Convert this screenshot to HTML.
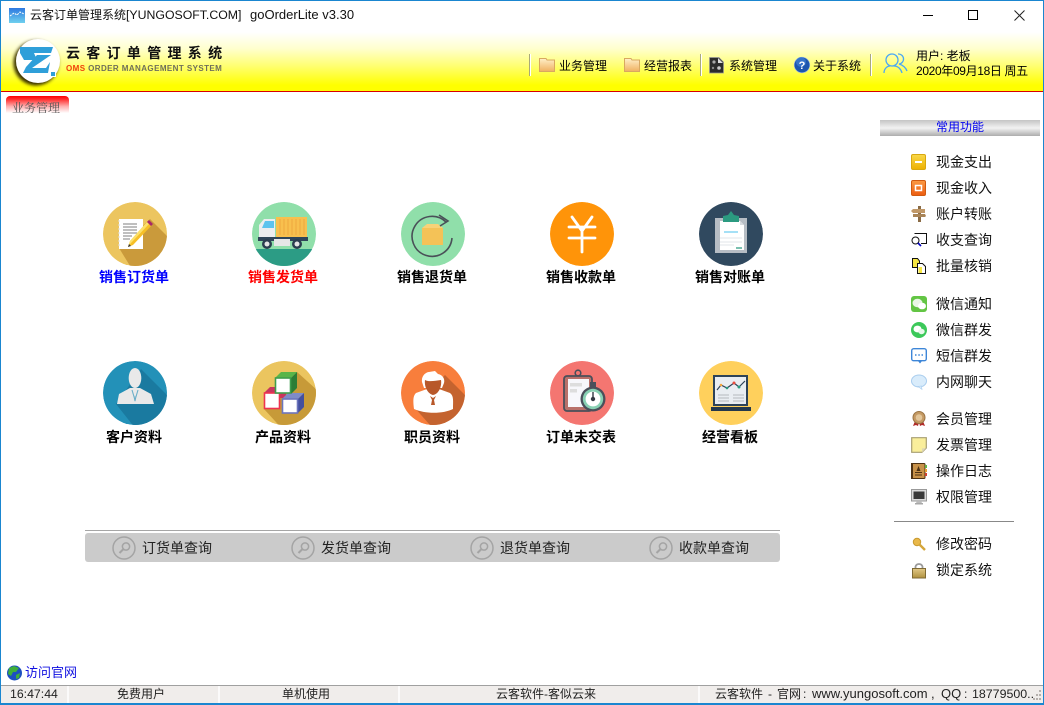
<!DOCTYPE html>
<html lang="zh"><head><meta charset="utf-8"><title>云客订单管理系统</title>
<style>
html,body{margin:0;padding:0;background:#fff}
#w{position:relative;width:1044px;height:705px;overflow:hidden;background:#fff;font-family:"Liberation Sans","Noto Sans CJK SC",sans-serif;color:#000;font-size:12px}
.t{position:absolute;white-space:nowrap;line-height:16px;height:16px}
.c{text-align:center;transform:translateX(-50%)}
.l{font-size:14px;font-weight:bold}
.m{font-size:14px;color:#111;left:936px}
.q{font-size:14px;color:#222}
.s{top:686px;color:#222}
.u{font-size:13px}
svg{position:absolute;left:0;top:0}
#hd{position:absolute;left:1px;right:1px;top:32px;height:59px;background:linear-gradient(#fff 0,#ffffce 28%,#ffff70 58%,#ffff00 90%,#ffff00 100%);border-bottom:1px solid #d80000}
#tab{position:absolute;left:6px;top:96px;width:63px;height:19px;border-radius:4px 4px 0 0;background:linear-gradient(#f00 0,#ff3030 18%,#ffb0b0 55%,#fff 90%)}
#cm{position:absolute;left:880px;top:120px;width:160px;height:16px;background:linear-gradient(#c4c4c4 0,#f2f2f2 50%,#adadad 100%)}
#bar{position:absolute;left:85px;top:533px;width:695px;height:29px;background:#cbcbcb;border-radius:3px}
#ln{position:absolute;left:85px;top:530px;width:695px;height:1px;background:#a6a6a6}
#sb{position:absolute;left:1px;right:1px;top:685px;height:18px;background:#f0edeb;border-top:1px solid #a0a0a0}
.sp{position:absolute;top:686px;width:2px;height:17px;background:#fbfafa}
#bl{position:absolute;left:0;top:0;width:1044px;height:705px;box-sizing:border-box;border:1px solid #1a86d0;border-bottom-width:2px;pointer-events:none}
</style></head><body>
<div id="w">
<div id="hd"></div>
<div id="tab"></div>
<div id="cm"></div>
<div id="ln"></div>
<div id="bar"></div>
<div id="sb"></div>
<div class="sp" style="left:67px"></div>
<div class="sp" style="left:218px"></div>
<div class="sp" style="left:398px"></div>
<div class="sp" style="left:698px"></div>

<svg width="1044" height="705" viewBox="0 0 1044 705">
<defs>
<clipPath id="cc"><circle cx="0" cy="0" r="32"/></clipPath>
<linearGradient id="ti" x1="0" y1="0" x2="0" y2="1"><stop offset="0" stop-color="#2d78e0"/><stop offset="1" stop-color="#6fd0ee"/></linearGradient>
<linearGradient id="fo" x1="0" y1="0" x2="0" y2="1"><stop offset="0" stop-color="#fff0c8"/><stop offset="1" stop-color="#f0b060"/></linearGradient>
<linearGradient id="yl" x1="0" y1="0" x2="0" y2="1"><stop offset="0" stop-color="#f9d84a"/><stop offset="1" stop-color="#edb000"/></linearGradient>
<linearGradient id="og" x1="0" y1="0" x2="0" y2="1"><stop offset="0" stop-color="#fb9a44"/><stop offset="1" stop-color="#ec5c10"/></linearGradient>
<linearGradient id="lk" x1="0" y1="0" x2="0" y2="1"><stop offset="0" stop-color="#e2c987"/><stop offset="1" stop-color="#b0913f"/></linearGradient>
<filter id="bl2"><feGaussianBlur stdDeviation="1.6"/></filter>
</defs>
<!-- title icon -->
<rect x="9" y="8" width="16" height="15" fill="url(#ti)"/>
<polyline points="10,16 14,13 17,15 20,12 24,14" fill="none" stroke="#fff" stroke-width="1" stroke-dasharray="2 1"/>
<!-- window controls -->
<path d="M923 15.5H933" stroke="#000" fill="none"/>
<rect x="968.5" y="10.5" width="9" height="9" fill="none" stroke="#000"/>
<path d="M1014.5 10.5L1024.5 20.5M1024.5 10.5L1014.5 20.5" stroke="#222" fill="none"/>
<!-- logo -->
<circle cx="36" cy="63" r="22.5" fill="#3a3000" filter="url(#bl2)"/>
<circle cx="38" cy="61" r="22" fill="#fff"/>
<path d="M20 47H53L51 53H34L37 60H24L20 53Z" fill="#2f9fd9"/>
<path d="M37 55H51L32 68H46L50 62L48 73H23L26 67Z" fill="#2f9fd9"/>
<rect x="50.5" y="71.5" width="5" height="5" fill="#2f9fd9" stroke="#fff"/>
<!-- menu separators -->
<g fill="#a9a97a"><rect x="529" y="54" width="1" height="22"/><rect x="700" y="54" width="1" height="22"/><rect x="870" y="54" width="1" height="22"/></g>
<g fill="#fff"><rect x="530" y="54" width="1" height="22"/><rect x="701" y="54" width="1" height="22"/><rect x="871" y="54" width="1" height="22"/></g>
<!-- folders -->
<path d="M539.5 58.5H546L547 60H554.5V71.5H539.5Z" fill="url(#fo)" stroke="#d8a860"/>
<path d="M624.5 58.5H631L632 60H639.5V71.5H624.5Z" fill="url(#fo)" stroke="#d8a860"/>
<!-- puzzle -->
<path d="M709.500 57.500H719L723.500 62V73H709.500Z" fill="#2c2c2c" stroke="#999" stroke-width=".7"/>
<path d="M718 58L723 63H718Z" fill="#ddd"/>
<circle cx="714" cy="62" r="1.600" fill="#aaa"/><circle cx="719" cy="68" r="1.800" fill="#ccc"/><circle cx="713" cy="68" r="1.200" fill="#888"/>
<!-- help -->
<circle cx="802" cy="65" r="7.800" fill="#1c56ae" stroke="#9bb6e0" stroke-width=".6"/>
<circle cx="801" cy="62" r="5" fill="#3f80d4" opacity=".7"/>
<text x="802" y="69" font-family="Liberation Sans" font-size="11" font-weight="bold" fill="#fff" text-anchor="middle">?</text>
<!-- user -->
<g fill="none" stroke="#4ba8f4" stroke-width="1.300">
<circle cx="892" cy="60" r="6"/><path d="M884 73C884 69 887 66 890 66M894 66C898 66 901 69 902 73"/>
<path d="M898 54A5 5 0 0 1 899 64C903 65 906 68 907 71"/>
</g>

<!-- ICON 1 -->
<g transform="translate(135 234)" clip-path="url(#cc)">
<circle r="32" fill="#ecc55f"/>
<path d="M15 -15L33 3V40H0L-16 14Z" fill="#ca9a3b"/>
<rect x="-16" y="-15" width="24" height="30" fill="#fff"/>
<path d="M-17 -13h2M-17 -9h2M-17 -5h2M-17 -1h2M-17 3h2M-17 7h2M-17 11h2" stroke="#ddd"/>
<path d="M-12 -10h14M-12 -7h14M-12 -4h14M-12 -1h14M-12 2h9M-12 5h7" stroke="#aaa" stroke-width="1.400"/>
<path d="M-7 13L-5 7L12 -12L16 -8L-2 11Z" fill="#f6bf26"/>
<path d="M-7 13L-5 7L12 -12L14 -10L-4 9Z" fill="#fbe06a"/>
<path d="M12 -12L14 -14L18 -10L16 -8Z" fill="#a82868"/>
<path d="M-7 13L-6 10L-4 12Z" fill="#333"/>
</g>
<!-- ICON 2 -->
<g transform="translate(284 234)" clip-path="url(#cc)">
<circle r="32" fill="#90dfaa"/>
<rect x="-32" y="15" width="64" height="20" fill="#2c9c85"/>
<rect x="-8" y="-17" width="31" height="20" fill="#f8c04e"/>
<path d="M-4-15v16M0-15v16M4-15v16M8-15v16M12-15v16M16-15v16M20-15v16" stroke="#eea83e"/>
<path d="M-25 3V-9L-20 -15H-9V3Z" fill="#ecedef"/>
<path d="M-22 -6L-19 -13H-10V-6Z" fill="#5cc3ee"/>
<rect x="-26" y="3" width="50" height="4" fill="#2f4559"/>
<rect x="-10" y="5" width="16" height="7" fill="#e6e6e6"/>
<circle cx="-17" cy="10" r="5" fill="#2b3e50"/><circle cx="-17" cy="10" r="2.500" fill="#e6e6e6"/>
<circle cx="13" cy="10" r="5" fill="#2b3e50"/><circle cx="13" cy="10" r="2.500" fill="#e6e6e6"/>
</g>
<!-- ICON 3 -->
<g transform="translate(433 234)" clip-path="url(#cc)">
<circle r="32" fill="#90dfaa"/>
<rect x="-11" y="-6" width="21" height="17" fill="#f4c257"/>
<path d="M-11 -6L-6 -10H5L10 -6Z" fill="#f7d277"/>
<path d="M13 -12A20 20 0 1 0 19 4" fill="none" stroke="#4a5058" stroke-width="1.600"/>
<path d="M6 -19L15 -13L7 -8" fill="none" stroke="#4a5058" stroke-width="1.600"/>
</g>
<!-- ICON 4 -->
<g transform="translate(582 234)" clip-path="url(#cc)">
<circle r="32" fill="#ff9409"/>
<path d="M-10 -17L0 -3L10 -17M-13 -7H13M-13 4H13M0 -3V18" fill="none" stroke="#fff" stroke-width="2.800" stroke-linecap="round"/>
</g>
<!-- ICON 5 -->
<g transform="translate(731 234)" clip-path="url(#cc)">
<circle r="32" fill="#30495f"/>
<rect x="-16" y="-16" width="32" height="35" fill="#b6bdc4"/>
<path d="M-11 -13H9L13 -9V16H-11Z" fill="#fff"/>
<path d="M9 -13L13 -9H9Z" fill="#d7dbdf"/>
<path d="M-8 -12V-18L-3 -19L0 -23L3 -19L8 -18V-12Z" fill="#2b9a80"/>
<path d="M-7 -2H7" stroke="#6fcdf0" stroke-width="1.200"/>
<path d="M-11 4H11M-11 8H11M-11 11H3" stroke="#e8ebee" stroke-width="1.200"/>
<path d="M5 14H11" stroke="#2b9a80" stroke-width="1.200"/>
</g>
<!-- ICON 6 -->
<g transform="translate(135 393)" clip-path="url(#cc)">
<circle r="32" fill="#2391b8"/>
<path d="M6 -24L33 3V40H4L-19 11Z" fill="#1a7aa0"/>
<ellipse cx="0" cy="-15" rx="6.300" ry="10" fill="#e9e9e9"/>
<path d="M-18 11L-16 1L-5 -5H5L16 1L19 11Z" fill="#e9e9e9"/>
<path d="M-3 -3L0 7L3 -3M-1 3L0 8L1 3" fill="none" stroke="#6aaec8" stroke-width="1.100"/>
</g>
<!-- ICON 7 -->
<g transform="translate(284 393)" clip-path="url(#cc)">
<circle r="32" fill="#ebc55f"/>
<path d="M13 -21L33 -3V40H2L-20 16Z" fill="#c79a38"/>
<path d="M-20 0L-14 -6H2V5H-20Z" fill="#c8365e"/>
<rect x="-19.500" y="0" width="15" height="15.500" fill="#fff" stroke="#ee3350" stroke-width="1.600"/>
<path d="M-2 6L4 0H20L14 6Z" fill="#7f8bc8"/>
<path d="M14 6L20 0V14L14 20Z" fill="#434f9f"/>
<rect x="-1.500" y="6" width="15" height="14" fill="#fff" stroke="#6d75bd" stroke-width="1.600"/>
<path d="M-9 -15L-3 -21H13L7 -15Z" fill="#59b549"/>
<path d="M7 -15L13 -21V-5L7 1Z" fill="#2c7d36"/>
<rect x="-8.500" y="-15" width="15" height="15" fill="#fff" stroke="#3f9d4d" stroke-width="1.600"/>
</g>
<!-- ICON 8 -->
<g transform="translate(433 393)" clip-path="url(#cc)">
<circle r="32" fill="#f87e3c"/>
<path d="M12 -18L33 3V40H4L-19 14Z" fill="#c4632f"/>
<path d="M-19 16C-20 7 -20 3 -17 0L-6 -4H6L17 0C21 3 20 8 20 16C10 21 -8 21 -19 16Z" fill="#fff"/>
<path d="M-11 -11C-12 -17 -7 -21 -4 -21L2 -22L5 -19C10 -18 12 -14 11 -10L9 -5L-9 -5Z" fill="#fff"/>
<path d="M-8 -13C-5 -11 2 -12 8 -13C9 -7 6 1 0 2C-5 1 -9 -6 -8 -13Z" fill="#b8582a"/>
<path d="M-3 3L0 5L3 3L1 7L2 12H-2L-1 7Z" fill="#b8582a"/>
</g>
<!-- ICON 9 -->
<g transform="translate(582 393)" clip-path="url(#cc)">
<circle r="32" fill="#f47671"/>
<circle cx="-4" cy="-20" r="2.800" fill="none" stroke="#4a4f5a" stroke-width="1.600"/>
<rect x="-18" y="-17" width="28" height="35" rx="3" fill="#b8706a" stroke="#4a4f5a" stroke-width="1.800"/>
<rect x="-14" y="-14" width="21" height="28" fill="#f7f7fb"/>
<rect x="-12" y="-10" width="12" height="3.500" fill="#ddd"/><rect x="-12" y="-4" width="7" height="3.500" fill="#ddd"/>
<rect x="8" y="-11" width="6" height="5" fill="#4a4f5a"/>
<circle cx="11" cy="6" r="12.500" fill="#4a4f5a"/>
<circle cx="11" cy="6" r="10.200" fill="#88d0b3"/>
<circle cx="11" cy="6" r="7.400" fill="#fff"/>
<path d="M11 -1V6" stroke="#343a44" stroke-width="1.400"/><circle cx="11" cy="6" r="2.200" fill="#343a44"/>
</g>
<!-- ICON 10 -->
<g transform="translate(731 393)" clip-path="url(#cc)">
<circle r="32" fill="#ffd05c"/>
<rect x="-17" y="-17" width="33" height="29" fill="#e9edf2" stroke="#2e4358" stroke-width="2"/>
<rect x="-20" y="14" width="40" height="4" fill="#24384c"/>
<polyline points="-14,-3 -10,-8 -4,-5 3,-10 8,-6 14,-12" fill="none" stroke="#2e4358" stroke-width="1.200"/>
<circle cx="-10" cy="-8" r="1.300" fill="#f2a33c"/><circle cx="-4" cy="-5" r="1.300" fill="#2a9c80"/><circle cx="3" cy="-10" r="1.500" fill="#e84c3d"/><circle cx="8" cy="-6" r="1.500" fill="#2a9c80"/>
<path d="M-13 2H-2M2 2H13M-13 5H-2M2 5H13M-13 8H-2M2 8H13" stroke="#c0c4c8" stroke-width="1.200"/>
</g>

<!-- RIGHT ICONS -->
<g transform="translate(911 154)"><rect x=".5" y=".5" width="14" height="15" rx="1.500" fill="url(#yl)" stroke="#d8a810"/><rect x="4" y="7" width="7" height="2" fill="#fff"/></g>
<g transform="translate(911 180)"><rect x=".5" y=".5" width="14" height="15" rx="1.500" fill="url(#og)" stroke="#d05a10"/><rect x="4.500" y="5.500" width="6" height="5" fill="none" stroke="#fff" stroke-width="1.500"/></g>
<g transform="translate(911 206)"><rect x="7" y="0" width="3" height="16" fill="#8a6b45"/><path d="M2 3H14V7H2L0 5Z" fill="#c09868"/><path d="M2 8H14L15 10L14 11H2Z" fill="#a88458"/></g>
<g transform="translate(911 232)" fill="none" stroke="#111"><path d="M3.500 1.500H15.500V11.500H10"/><circle cx="4.500" cy="8.500" r="3.500"/><path d="M7 11L10 14" stroke="#0000c0" stroke-width="1.600"/></g>
<g transform="translate(911 258)"><path d="M1.500 .5H6.500L8.500 3V9.500H1.500Z" fill="#f6e642" stroke="#111"/><path d="M6.500 5.500H11.500L14.500 8.500V15.500H6.500Z" fill="#fff" stroke="#111"/><rect x="7.500" y="9" width="3.500" height="6" fill="#f6e642"/></g>
<g transform="translate(911 296)"><rect width="16" height="16" rx="3" fill="#63c544"/><ellipse cx="6.500" cy="7" rx="5" ry="4.200" fill="#e9f6e5"/><ellipse cx="11" cy="10" rx="4" ry="3.300" fill="#fff"/></g>
<g transform="translate(911 322)"><circle cx="8" cy="8" r="8" fill="#3cc85a"/><ellipse cx="6.500" cy="7" rx="4" ry="3.400" fill="#fff"/><ellipse cx="10.500" cy="9.500" rx="3.200" ry="2.700" fill="#e8f8ea"/></g>
<g transform="translate(911 348)"><rect x=".7" y=".7" width="14.600" height="12" rx="2" fill="#fff" stroke="#3d86d8" stroke-width="1.400"/><path d="M7 13L9 15.500L11 13" fill="#3d86d8"/><path d="M4 7H5.500M7.300 7H8.800M10.500 7H12" stroke="#3d86d8" stroke-width="1.400"/></g>
<g transform="translate(911 374)"><ellipse cx="8" cy="7" rx="7.500" ry="6" fill="#d9ecfb" stroke="#a9cdee"/><path d="M7 12.500L11 15.500L10.500 12Z" fill="#d9ecfb" stroke="#a9cdee" stroke-width=".6"/></g>
<g transform="translate(911 411)"><path d="M4 10L2 15L5 14L7 15L8 11M12 10L14 15L11 14L9 15L8 11Z" fill="#b02a28"/><circle cx="8" cy="6.500" r="6" fill="#c59a64" stroke="#9a7444"/><circle cx="8" cy="6.500" r="3.300" fill="#e3c69a"/></g>
<g transform="translate(911 437)"><path d="M.7 .7H15.300V11L11 15.300H.7Z" fill="#f9ee9b" stroke="#a89f70" stroke-width="1.200"/><path d="M15 11L11 11.500V15.500Z" fill="#ddd7b5"/></g>
<g transform="translate(911 463)"><rect x=".5" y=".5" width="13.500" height="15" rx="1" fill="#c8924a" stroke="#4e3214"/><rect x="0" y="0" width="2" height="16" fill="#4e3214"/><path d="M7.500 3L9.500 8H5.500Z" fill="#4e3214"/><path d="M4 9.500H11M4 12H11" stroke="#4e3214"/><rect x="14" y="2" width="2" height="3" fill="#63b346"/><rect x="14" y="6" width="2" height="3" fill="#e9a030"/><rect x="14" y="10" width="2" height="3" fill="#d04030"/></g>
<g transform="translate(911 489)"><rect x=".5" y=".5" width="15" height="11.500" fill="#dcdcdc" stroke="#999"/><rect x="2.500" y="2.500" width="11" height="7.500" fill="#3a3a3a"/><path d="M6 12H10L11 14H5Z" fill="#bbb"/><rect x="4" y="14" width="8" height="1.500" fill="#a8a8a8"/></g>
<g transform="translate(911 536)"><circle cx="6" cy="6" r="3.700" fill="#e9b84a" stroke="#c89a30"/><path d="M8 8L14 14" stroke="#d5a63a" stroke-width="2.400"/></g>
<g transform="translate(911 562)"><path d="M4.500 8V4.500A3.700 3.700 0 0 1 11.500 4.500V8" fill="none" stroke="#9a9a9a" stroke-width="1.800"/><rect x="1.500" y="6.500" width="13" height="9.500" fill="url(#lk)" stroke="#7f6a34"/></g>

<!-- divider -->
<rect x="894" y="521" width="120" height="1" fill="#888"/>

<!-- query icons -->
<g fill="none" stroke="#a4a4a4" stroke-width="1.500">
<circle cx="124" cy="548" r="11"/><circle cx="126" cy="546.500" r="3.600"/><path d="M123.500 549L119.500 553" stroke-width="2"/>
<circle cx="303" cy="548" r="11"/><circle cx="305" cy="546.500" r="3.600"/><path d="M302.500 549L298.500 553" stroke-width="2"/>
<circle cx="482" cy="548" r="11"/><circle cx="484" cy="546.500" r="3.600"/><path d="M481.500 549L477.500 553" stroke-width="2"/>
<circle cx="661" cy="548" r="11"/><circle cx="663" cy="546.500" r="3.600"/><path d="M660.500 549L656.500 553" stroke-width="2"/>
</g>
<!-- globe -->
<circle cx="14.500" cy="673" r="7.500" fill="#1c4fc0"/>
<path d="M9 668L14 666L19 668L16 672L13 672L11 676L8 674Z" fill="#3fae3a"/><path d="M16 675L20 673L19 678L16 679Z" fill="#3fae3a"/>
<!-- grip -->
<g fill="#b5b0ac"><rect x="1039" y="690" width="2" height="2"/><rect x="1036" y="694" width="2" height="2"/><rect x="1039" y="694" width="2" height="2"/><rect x="1033" y="698" width="2" height="2"/><rect x="1036" y="698" width="2" height="2"/><rect x="1039" y="698" width="2" height="2"/></g>
</svg>

<div class="t" style="left:30px;top:7px;color:#111">云客订单管理系统</div>
<div class="t" style="left:126px;top:7px;color:#111;font-size:12.300px">[YUNGOSOFT.COM]</div>
<div class="t u" style="left:250px;top:7px;color:#111">goOrderLite v3.30</div>
<div class="t" style="left:66px;top:45px;font-size:14px;font-weight:bold;letter-spacing:6.300px;color:#111">云客订单管理系统</div>
<div class="t" style="left:66px;top:61px;font-size:8px;font-weight:bold;letter-spacing:.42px;color:#6f6f5a"><span style="color:#f0400c">OMS</span> ORDER MANAGEMENT SYSTEM</div>
<div class="t" style="left:12px;top:100px;color:#555;font-family:'Liberation Serif','Noto Serif CJK SC',serif">业务管理</div>
<div class="t" style="left:559px;top:58px">业务管理</div>
<div class="t" style="left:644px;top:58px">经营报表</div>
<div class="t" style="left:729px;top:58px">系统管理</div>
<div class="t" style="left:813px;top:58px">关于系统</div>
<div class="t" style="left:916px;top:48px">用户: 老板</div>
<div class="t" style="left:916px;top:63px;letter-spacing:-.35px">2020年09月18日 周五</div>
<div class="t c" style="left:960px;top:119px;color:#0000f0">常用功能</div>

<div class="t c l" style="left:134px;top:269px;color:#0000ff">销售订货单</div>
<div class="t c l" style="left:283px;top:269px;color:#ff0000">销售发货单</div>
<div class="t c l" style="left:432px;top:269px">销售退货单</div>
<div class="t c l" style="left:581px;top:269px">销售收款单</div>
<div class="t c l" style="left:730px;top:269px">销售对账单</div>
<div class="t c l" style="left:134px;top:429px">客户资料</div>
<div class="t c l" style="left:283px;top:429px">产品资料</div>
<div class="t c l" style="left:432px;top:429px">职员资料</div>
<div class="t c l" style="left:581px;top:429px">订单未交表</div>
<div class="t c l" style="left:730px;top:429px">经营看板</div>

<div class="t m" style="top:154px">现金支出</div>
<div class="t m" style="top:180px">现金收入</div>
<div class="t m" style="top:206px">账户转账</div>
<div class="t m" style="top:232px">收支查询</div>
<div class="t m" style="top:258px">批量核销</div>
<div class="t m" style="top:296px">微信通知</div>
<div class="t m" style="top:322px">微信群发</div>
<div class="t m" style="top:348px">短信群发</div>
<div class="t m" style="top:374px">内网聊天</div>
<div class="t m" style="top:411px">会员管理</div>
<div class="t m" style="top:437px">发票管理</div>
<div class="t m" style="top:463px">操作日志</div>
<div class="t m" style="top:489px">权限管理</div>
<div class="t m" style="top:536px">修改密码</div>
<div class="t m" style="top:562px">锁定系统</div>

<div class="t q" style="left:142px;top:540px">订货单查询</div>
<div class="t q" style="left:321px;top:540px">发货单查询</div>
<div class="t q" style="left:500px;top:540px">退货单查询</div>
<div class="t q" style="left:679px;top:540px">收款单查询</div>

<div class="t" style="left:25px;top:665px;font-size:13px;color:#1010e0">访问官网</div>
<div class="t s" style="left:10px;font-size:12.300px">16:47:44</div>
<div class="t s" style="left:117px">免费用户</div>
<div class="t s" style="left:282px">单机使用</div>
<div class="t s" style="left:496px">云客软件-客似云来</div>
<div class="t s" style="left:715px">云客软件</div>
<div class="t s" style="left:768px">-</div>
<div class="t s" style="left:777px">官网</div>
<div class="t s" style="left:803px">:</div>
<div class="t s u" style="left:812px">www.yungosoft.com</div>
<div class="t s u" style="left:931px">,</div>
<div class="t s u" style="left:941px">QQ</div>
<div class="t s" style="left:964px">:</div>
<div class="t s" style="left:972px;font-size:12.400px;width:61px;overflow:hidden">18779500...</div>
<div id="bl"></div>
</div>
</body></html>
